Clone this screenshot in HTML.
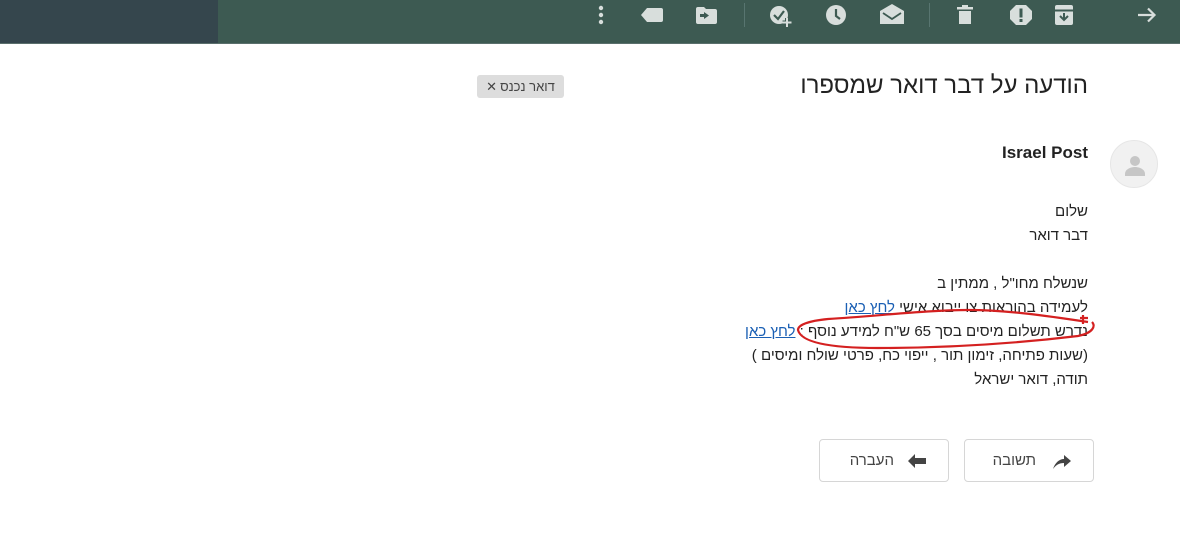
<!DOCTYPE html>
<html><head><meta charset="utf-8"><style>
body{margin:0;width:1180px;height:546px;background:#fff;position:relative;overflow:hidden;font-family:"Liberation Sans",Arial,sans-serif;color:#222}
.tb{position:absolute;left:0;top:0;width:1180px;height:43px;background:#3d5a52;border-bottom:1px solid #5a6f6c}
.tbl{position:absolute;left:0;top:0;width:218px;height:43px;background:#35464d}
.r{position:absolute;direction:rtl;white-space:nowrap}
.ln{position:absolute;right:92px;direction:rtl;white-space:nowrap;font-size:15px;color:#222}
a{color:#1a5fb4;text-decoration:underline}
.btn{position:absolute;top:439px;height:43px;border:1px solid #d6d6d6;border-radius:4px;box-sizing:border-box;font-size:16px;color:#444;direction:rtl}
</style></head><body>
<div class="tb"><div class="tbl"></div>
<svg style="position:absolute;left:0;top:0" width="1180" height="43" fill="#d8dedc">
<circle cx="601" cy="8" r="2.2"/><circle cx="601" cy="15" r="2.2"/><circle cx="601" cy="22" r="2.2"/>
<path d="M647 8h14a2 2 0 0 1 2 2v10a2 2 0 0 1-2 2h-14l-6-7z"/>
<path d="M698 7h6l2 2h9a2 2 0 0 1 2 2v11a2 2 0 0 1-2 2h-17a2 2 0 0 1-2-2v-13a2 2 0 0 1 2-2z"/>
<path d="M704 12v2h-4v3h4v2l5-3.5z" fill="#3d5a52"/>
<rect x="744" y="3" width="1" height="24" fill="#587570"/>
<circle cx="779" cy="15" r="9"/><path d="M774 15l4 4 6-8" stroke="#3d5a52" stroke-width="2.2" fill="none"/><path d="M787 18v9M782.5 22.5h9" stroke="#3d5a52" stroke-width="4"/><path d="M787 18v9M782.5 22.5h9" stroke="#d8dedc" stroke-width="2"/>
<circle cx="836" cy="15" r="10"/><path d="M836 9v7l4 3" stroke="#3d5a52" stroke-width="2.2" fill="none"/>
<path d="M880 11l12-7 12 7v13h-24z"/><path d="M883 13l9 6 9-6" stroke="#3d5a52" stroke-width="1.8" fill="none"/>
<rect x="929" y="3" width="1" height="24" fill="#587570"/>
<path d="M957 7h16v2.5h-16zM962 5h6v2h-6zM959 11h12v13h-12z"/>
<path d="M1016 5h10l6 6v8l-6 6h-10l-6-6v-8z"/><rect x="1019.5" y="8.5" width="3" height="9" fill="#3d5a52"/><rect x="1019.5" y="19" width="3" height="3" fill="#3d5a52"/>
<path d="M1057 5h14a2 2 0 0 1 2 2v16a2 2 0 0 1-2 2h-14a2 2 0 0 1-2-2v-16a2 2 0 0 1 2-2z"/><path d="M1055 10.5h18M1060 16l4 4 4-4M1064 13v7" stroke="#3d5a52" stroke-width="2" fill="none"/>
<path d="M1138 15h16M1148 8.5l6.5 6.5-6.5 6.5" stroke="#d8dedc" stroke-width="2.2" fill="none"/>
</svg></div>
<div class="r" style="right:92px;top:72px;font-size:24px;color:#222">הודעה על דבר דואר שמספרו</div>
<div class="r" style="left:477px;top:75px;width:87px;height:23px;background:#ddd;border-radius:3px;font-size:13px;color:#444;line-height:23px;text-align:center">דואר נכנס<span style="margin-right:3px">✕</span></div>
<div style="position:absolute;left:1110px;top:140px;width:48px;height:48px;border-radius:50%;background:#f1f1f1;border:1px solid #e6e6e6;box-sizing:border-box">
<svg width="48" height="48"><circle cx="24" cy="20" r="5" fill="#c6c6c6"/><path d="M14 33c0-5 6-7 10-7s10 2 10 7v2h-20z" fill="#c6c6c6"/></svg></div>
<div class="r" style="right:92px;top:143px;font-size:17px;font-weight:bold;color:#222">Israel Post</div>
<div class="ln" style="top:203px">שלום</div>
<div class="ln" style="top:227px">דבר דואר</div>
<div class="ln" style="top:275px">שנשלח מחו"ל , ממתין ב</div>
<div class="ln" style="top:299px">לעמידה בהוראות צו ייבוא אישי <a>לחץ כאן</a></div>
<div class="ln" style="top:323px">נדרש תשלום מיסים בסך 65 ש"ח למידע נוסף : <a>לחץ כאן</a></div>
<div class="ln" style="top:347px">(שעות פתיחה, זימון תור , ייפוי כח, פרטי שולח ומיסים )</div>
<div class="ln" style="top:371px">תודה, דואר ישראל</div>
<svg style="position:absolute;left:0;top:0" width="1180" height="546"><path d="M1088 322c-40-6-80-12-120-12-40 0-90 6-140 9-20 2-30 6-30 11 3 12 30 18 80 18 80 0 150-6 200-12 15-3 18-10 14-14M1083 315v9M1080 318h8" stroke="#d42020" stroke-width="2.2" fill="none"/></svg>
<div class="btn" style="left:964px;width:130px"><span style="position:absolute;right:57px;top:12px;font-size:15px">תשובה</span>
<svg style="position:absolute;left:86px;top:12px" width="22" height="18"><path d="M2 17c2-6 6-10 11-10v-4l7 6-7 6v-4c-5 0-8 2-11 6z" fill="#444"/></svg></div>
<div class="btn" style="left:819px;width:130px"><span style="position:absolute;right:54px;top:12px;font-size:15px">העברה</span>
<svg style="position:absolute;left:86px;top:12px" width="22" height="18"><path d="M2 9l7-7v4h11v6h-11v4z" fill="#444"/></svg></div>
</body></html>
